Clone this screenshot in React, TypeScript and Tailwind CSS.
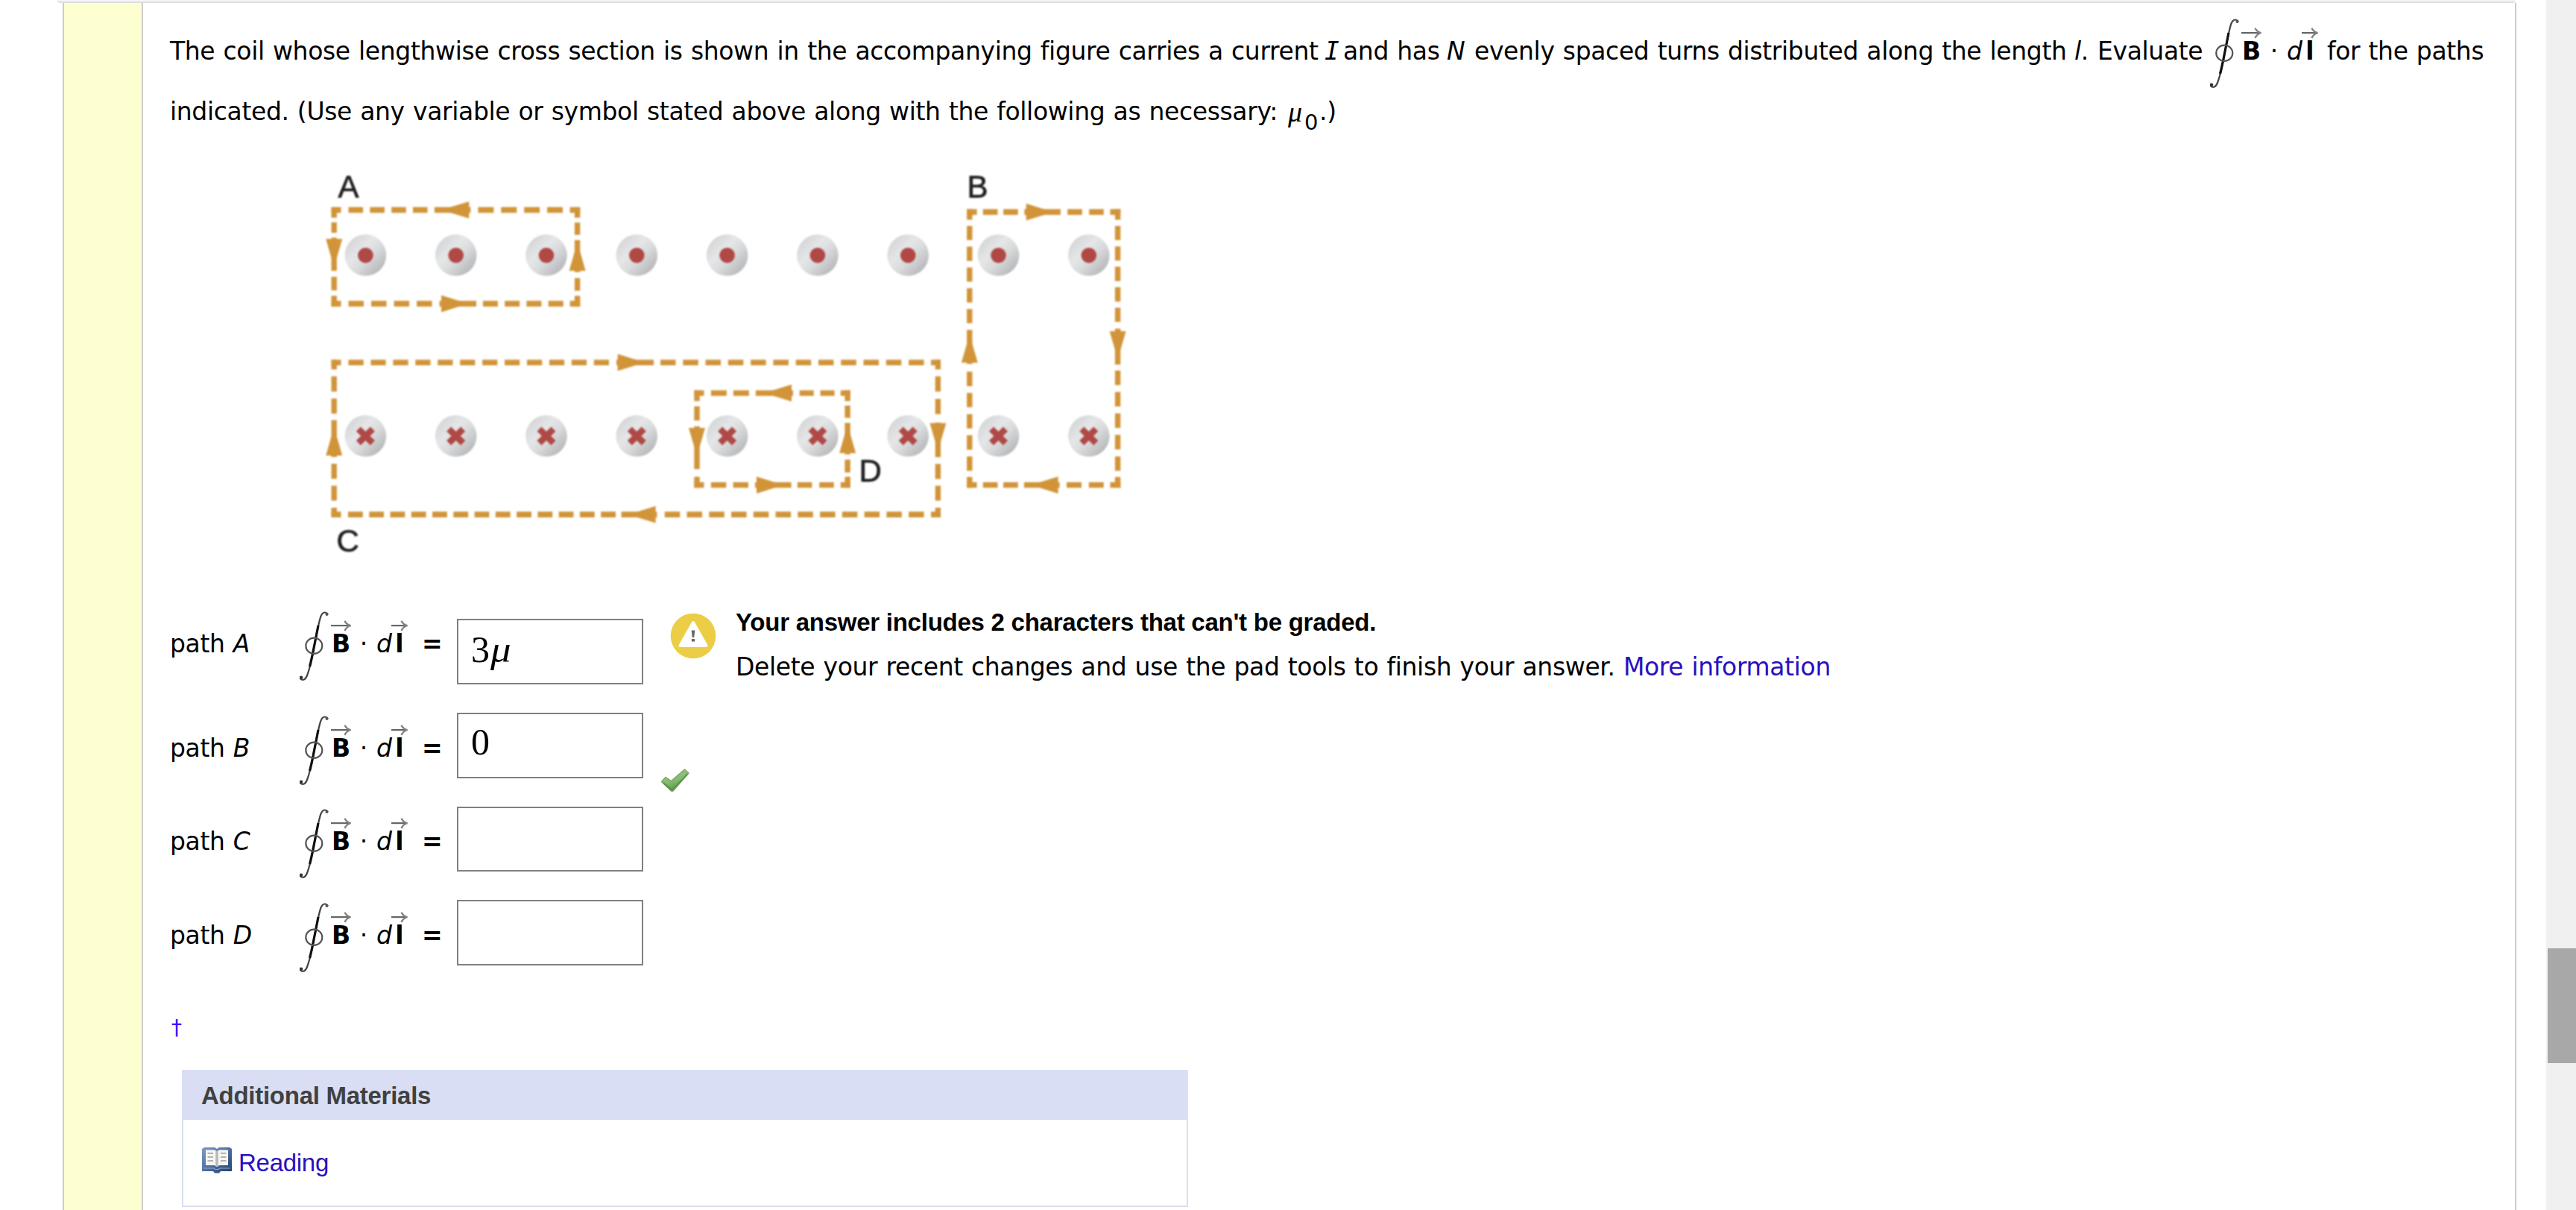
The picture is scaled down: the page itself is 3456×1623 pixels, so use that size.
import React from "react";

type Seg = [number, number];
type Dir = "left" | "right" | "up" | "down";
type Side = { axis: "h" | "v"; at: number; segs: Seg[]; dir: Dir; base: number; tip: number };

const AMBER = "#d19439";

/* n equal dashes of the given length, spread from `from` to `to` */
const run = (from: number, to: number, n: number, len: number): Seg[] =>
  Array.from({ length: n }, (_, i) => {
    const s = n === 1 ? from : from + ((to - len - from) / (n - 1)) * i;
    return [s, s + len] as Seg;
  });

const sides: Side[] = [
  // Path A
  { axis: "h", at: 69.3, dir: "left", base: 209.3, tip: 172, segs: [[24.6, 37.5], ...run(47.5, 153.6, 4, 19.6), [162.9, 211.4], ...run(221.4, 335, 4, 21), [344.6, 358.2]] },
  { axis: "h", at: 191, dir: "right", base: 172, tip: 208, segs: [[24.6, 37.5], ...run(47.5, 159.6, 4, 20.5), [169.6, 219], ...run(227.9, 335.7, 4, 20), [344.6, 358.2]] },
  { axis: "v", at: 28.2, dir: "down", base: 107, tip: 144, segs: [[65.7, 79.3], [85.3, 99], [105.3, 148.3], [156, 173.7], [180.7, 194.7]] },
  { axis: "v", at: 354.6, dir: "up", base: 148.3, tip: 111, segs: [[65.7, 79.3], [85.7, 101.7], [108.3, 150], [157.7, 174.3], [180.7, 194.7]] },
  // Path B
  { axis: "h", at: 72, dir: "right", base: 956.7, tip: 993, segs: [[877.2, 890.6], ...run(898.8, 945.7, 2, 19.6), [954.3, 1002.9], ...run(1012.2, 1060.8, 2, 19.6), [1069.4, 1083.3]] },
  { axis: "h", at: 426.3, dir: "left", base: 999.6, tip: 963, segs: [[877.2, 890.6], ...run(898.8, 945.7, 2, 19.6), [953.9, 1001.6], ...run(1011, 1060.8, 2, 20), [1069.4, 1083.3]] },
  { axis: "v", at: 880.8, dir: "up", base: 267.7, tip: 231, segs: [[68.3, 82], ...run(90, 216.3, 5, 18.5), [225, 269.3], ...run(279.3, 408, 5, 18.7), [416, 430]] },
  { axis: "v", at: 1079.6, dir: "down", base: 226.7, tip: 263, segs: [[68.3, 82], ...run(90, 214.7, 5, 18.5), [223.3, 270], ...run(277.7, 408, 5, 18.8), [416, 430]] },
  // Path C
  { axis: "h", at: 267.3, dir: "right", base: 408.6, tip: 445, segs: [[24.6, 37.5], ...run(47.5, 397, 12, 20.2), [407, 457], ...run(466, 819.6, 12, 20.5), [829, 842]] },
  { axis: "h", at: 464.7, dir: "left", base: 459.6, tip: 423, segs: [[24.6, 37.5], ...run(47, 406, 13, 19.8), [413.6, 461.4], ...run(471.8, 819.6, 12, 20.5), [829, 842]] },
  { axis: "v", at: 28.2, dir: "up", base: 388, tip: 351, segs: [[263.7, 276.3], ...run(285.3, 333.7, 2, 19.7), [342, 390], ...run(398.7, 446.7, 2, 19.5), [455.7, 468.4]] },
  { axis: "v", at: 838.4, dir: "down", base: 346, tip: 382, segs: [[263.7, 276.3], ...run(285.3, 334.3, 2, 19.7), [345.3, 390.3], ...run(399, 446.7, 2, 19.5), [455.7, 468.4]] },
  // Path D
  { axis: "h", at: 307, dir: "left", base: 642, tip: 605, segs: [[511.4, 524.5], ...run(533.9, 584.9, 2, 21), [593.9, 644], ...run(652.7, 699.6, 2, 19), [707.8, 720.8]] },
  { axis: "h", at: 426.3, dir: "right", base: 595, tip: 631, segs: [[511.4, 524.5], ...run(533.9, 584, 2, 20.4), [593, 641.6], ...run(649.8, 698.8, 2, 19.6), [707.8, 720.8]] },
  { axis: "v", at: 515, dir: "down", base: 352.3, tip: 389, segs: [[303.3, 317.3], [324.3, 342.7], [350, 405.7], [415.7, 430]] },
  { axis: "v", at: 717.1, dir: "up", base: 385, tip: 348, segs: [[303.3, 317.3], [323.3, 339.3], [345.7, 386.7], [393.3, 410], [415.7, 430]] },
];

function PathSide({ side }: { side: Side }) {
  const { axis, at, segs, base, tip } = side;
  const d = segs
    .map(([a, b]) => (axis === "h" ? `M${a} ${at}H${b}` : `M${at} ${a}V${b}`))
    .join("");
  const head =
    axis === "h"
      ? `M${base} ${at - 11}L${tip} ${at}L${base} ${at + 11}Z`
      : `M${at - 11} ${base}L${at} ${tip}L${at + 11} ${base}Z`;
  return (
    <g>
      <path d={d} stroke={AMBER} strokeWidth="7.4" fill="none" />
      <path d={head} fill={AMBER} />
    </g>
  );
}

function CoilFigure() {
  const columns = Array.from({ length: 9 }, (_, i) => 70.4 + i * 121.3);
  return (
    <svg
      width="1110"
      height="558"
      viewBox="0 0 1110 540"
      preserveAspectRatio="none"
      className="ml-[192px] mt-10 block shrink-0 blur-[0.8px]"
    >
      <defs>
        <linearGradient id="wire" x1="0.1" y1="0.15" x2="0.85" y2="0.9">
          <stop offset="0" stopColor="#d3d5d6" />
          <stop offset="0.35" stopColor="#e5e6e7" />
          <stop offset="0.6" stopColor="#d9dadb" />
          <stop offset="1" stopColor="#b5b7ba" />
        </linearGradient>
      </defs>
      {columns.map((x) => (
        <g key={x}>
          <circle cx={x} cy="132.3" r="27.8" fill="url(#wire)" />
          <circle cx={x} cy="132.5" r="10.3" fill="#b04845" />
          <circle cx={x} cy="374.8" r="27.8" fill="url(#wire)" />
          <path d={`M${x - 9.5} 365.5l19 18.6M${x + 9.5} 365.5l-19 18.6`} stroke="#b04845" strokeWidth="8.6" />
        </g>
      )).map((node, i) => (
        <g key={i} transform="scale(1 0.9677)">{node}</g>
      ))}
      {sides.map((s, i) => (
        <PathSide key={i} side={s} />
      ))}
      <g fontFamily="'Liberation Sans', sans-serif" fontSize="42" fill="#1d1d1f" stroke="#1d1d1f" strokeWidth="0.7">
        <text x="33.6" y="53.3">A</text>
        <text x="877.4" y="53.3">B</text>
        <text x="31.5" y="512.8">C</text>
        <text x="732.5" y="422.3">D</text>
      </g>
    </svg>
  );
}

function VectorArrow({ width }: { width: number }) {
  return (
    <svg width={width} height="15" viewBox={`0 0 ${width} 15`} className="block">
      <path d={`M0 7.100H${width - 2}`} stroke="#666" strokeWidth="2.200" />
      <path
        d={`M${width - 8.5} 0.8C${width - 7} 4 ${width - 4} 6.4 ${width - 0.5} 7.1C${width - 4} 7.8 ${width - 7} 10.8 ${width - 8.5} 14`}
        stroke="#828282"
        strokeWidth="2.400"
        fill="none"
      />
    </svg>
  );
}

function ContourIntegral() {
  return (
    <div className="flex h-[93px] w-[145px] shrink-0 items-start leading-[34px] tracking-normal">
      <svg width="39" height="93" viewBox="0 0 39 93" className="mr-[3px] block shrink-0 blur-[0.4px]">
        <path
          d="M38 4C36 1 31.500 -0.500 28.500 6.500C26 13 23.500 26 19.500 46.700C16 66 13.500 77 10 86C7.500 92.500 4 93 0.500 90"
          fill="none"
          stroke="#444"
          strokeWidth="2.200"
        />
        <path d="M25 19C23 29 21.500 37 19.500 46.700C17.500 57 16 65 13.500 74" fill="none" stroke="#111" strokeWidth="3.200" />
        <circle cx="2" cy="88.800" r="2.300" fill="#333" />
        <circle cx="36.500" cy="4" r="2" fill="#555" />
        <ellipse cx="19.300" cy="46.300" rx="11" ry="10.600" fill="none" stroke="#555" strokeWidth="2.200" />
      </svg>
      <div className="flex w-[27px] flex-col items-center pt-3">
        <VectorArrow width={27} />
        <b>B</b>
      </div>
      <span className="w-[34px] pt-[27px] text-center">·</span>
      <i className="w-5 pt-[27px]">d</i>
      <div className="flex w-[22px] flex-col items-center pt-3">
        <VectorArrow width={22} />
        <b>l</b>
      </div>
    </div>
  );
}

function WarningIcon() {
  return (
    <svg width="62" height="62" viewBox="0 0 62 62" className="block">
      <circle cx="31" cy="31" r="30.300" fill="#ebce45" />
      <path d="M31 13L48.500 44H13.500Z" fill="#fff" stroke="#fff" strokeWidth="4" strokeLinejoin="round" />
      <path d="M28.700 23.500H33.300L32.200 33H29.800ZM28.900 35H33.100V38.600H28.900Z" fill="#666" />
    </svg>
  );
}

function CheckIcon() {
  return (
    <svg width="39" height="33" viewBox="0 0 39 33" className="block">
      <defs>
        <linearGradient id="tick" x1="0" y1="0" x2="0.4" y2="1">
          <stop offset="0" stopColor="#a3cb92" />
          <stop offset="0.6" stopColor="#83bb6c" />
          <stop offset="1" stopColor="#5d9648" />
        </linearGradient>
      </defs>
      <path d="M1.500 18.500L7 12.500L14.500 17.500L32.500 2L38 7L17 31H14.500Z" fill="url(#tick)" stroke="#7aa56a" strokeWidth="1.400" strokeLinejoin="round" />
      <path d="M4 20L15.500 30L36.500 8" fill="none" stroke="#5a9146" strokeWidth="1.800" />
    </svg>
  );
}

function BookIcon() {
  return (
    <svg width="40" height="37" viewBox="0 0 40 37" className="block">
      <defs>
        <linearGradient id="cover" x1="0" y1="0" x2="1" y2="1">
          <stop offset="0" stopColor="#7f9cc4" />
          <stop offset="0.500" stopColor="#4f6f9f" />
          <stop offset="1" stopColor="#1f3d70" />
        </linearGradient>
      </defs>
      <path d="M0 4L3 2H17L20 4L23 2H37L40 4V34H25L23 36.500H17L15 34H0Z" fill="url(#cover)" />
      <path d="M5 5.500H16.500L20 7L23.500 5.500H35V26H23.500L20 28L16.500 26H5Z" fill="#f5f5f3" />
      <path d="M20 7V27.500" stroke="#b9b9b9" strokeWidth="3.500" />
      <path d="M7.500 10H15M7.500 15H15M7.500 20H15M25 10H32.500M25 15H32.500M25 20H32.500" stroke="#b3b3b3" strokeWidth="1.800" />
      <path d="M2 30H16L18 31.500H22L24 30H38" stroke="#8fa6c8" strokeWidth="1.200" fill="none" />
    </svg>
  );
}

type RowProps = {
  name: string;
  row: string;
  label: string;
  formula: string;
  box: string;
  value?: React.ReactNode;
  children?: React.ReactNode;
};

function AnswerRow({ name, row, label, formula, box, value, children }: RowProps) {
  return (
    <div className={`flex shrink-0 items-start ${row}`}>
      <div className={`w-[174px] shrink-0 whitespace-nowrap ${label}`}>
        path <i>{name}</i>
      </div>
      <div className={`flex shrink-0 ${formula}`}>
        <ContourIntegral />
        <b className="w-[66px] pl-[19px] pt-6">=</b>
      </div>
      <div className={`w-[250px] shrink-0 border-2 border-[#808080] bg-white pl-[17px] font-['Liberation_Serif',serif] text-[50px] leading-[56px] tracking-normal ${box}`}>
        {value}
      </div>
      {children}
    </div>
  );
}

export default function App() {
  return (
    <div className="flex h-[1623px] w-[3456px] overflow-hidden bg-white font-['DejaVu_Sans',sans-serif] text-[33px] leading-10 tracking-[-0.36px] text-black [word-spacing:1.1px]">
      <div className="flex w-[3416px] shrink-0 flex-col">
        <div className="ml-[77px] h-1 w-[3298px] shrink-0 rounded-b-[4px] border-b-2 border-[#dedede] bg-[#f5f5f5]" />
        <div className="ml-[84px] flex w-[3292px] grow border-x-2 border-[#cccccc]">
          <div className="w-[106px] shrink-0 border-r-2 border-[#cccccc] bg-[#fdffd0]" />
          <div className="flex grow flex-col pl-9">
            <div className="mt-[45px] flex h-10 shrink-0 items-start whitespace-nowrap">
              <span className="w-[1549px]">The coil whose lengthwise cross section is shown in the accompanying figure carries a current</span>
              <i className="w-[25px] font-['DejaVu_Sans_Mono',monospace]">I</i>
              <span className="w-[139px]">and has</span>
              <i className="w-[37px]">N</i>
              <span className="w-[805px]">evenly spaced turns distributed along the length</span>
              <span className="w-[31px]"><i>l</i>.</span>
              <span className="w-[151px]">Evaluate</span>
              <div className="-mt-6 mr-3">
                <ContourIntegral />
              </div>
              <span>for the paths</span>
            </div>
            <div className="mt-[41px] flex h-10 shrink-0 whitespace-nowrap">
              <span className="w-[1500px]">indicated. (Use any variable or symbol stated above along with the following as necessary:</span>
              <i className="w-[22px] font-['Liberation_Serif',serif] text-[38px]">μ</i>
              <span className="w-[20px] pt-[14px] text-[29px]">0</span>
              <span>.)</span>
            </div>

            <CoilFigure />

            <div className="mt-[52px] flex flex-col">
              <AnswerRow
                name="A" row="h-[136px]" label="mt-6" formula="" box="mt-[10px] h-[88px] pt-[11px]"
                value={<>3<i className="ml-px inline-block origin-left scale-x-110">μ</i></>}
              >
                <div className="ml-9 mt-0.5">
                  <WarningIcon />
                </div>
                <div className="ml-[26px] mt-[-5px] whitespace-nowrap">
                  <div className="h-[60px] font-['Liberation_Sans',sans-serif] font-bold tracking-[-0.25px] [word-spacing:0px]">Your answer includes 2 characters that can't be graded.</div>
                  <div>
                    Delete your recent changes and use the pad tools to finish your answer.{" "}
                    <a className="text-[#2a10c0]">More information</a>
                  </div>
                </div>
              </AnswerRow>
              <AnswerRow name="B" row="h-[126px]" label="mt-7" formula="mt-1" box="h-[88px] pt-[9px]" value="0">
                <div className="ml-[23px] mt-[74px]">
                  <CheckIcon />
                </div>
              </AnswerRow>
              <AnswerRow name="C" row="h-[125px]" label="mt-[27px]" formula="mt-[3px]" box="h-[87px]" />
              <AnswerRow name="D" row="h-[128px]" label="mt-7" formula="mt-1" box="h-[88px]" />
            </div>

            <div className="mt-[24px] h-[40px] pl-[2px] text-[28px] text-[#3a10ff]">†</div>

            <div className="ml-4 mt-[36px] h-[184px] w-[1350px] shrink-0 border-2 border-[#d9def4] font-['Liberation_Sans',sans-serif] tracking-[-0.27px] [word-spacing:0px]">
              <div className="h-[65px] bg-[#d9def4] pl-6 pt-[13px] font-bold text-[#404040]">Additional Materials</div>
              <div className="flex items-start pl-[25px] pt-[35px]">
                <BookIcon />
                <a className="ml-[9px] mt-[3px] text-[#2a10c0]">Reading</a>
              </div>
            </div>
          </div>
        </div>
      </div>
      <div className="flex w-10 shrink-0 flex-col bg-[#f0f0f0] pl-0.5 pt-[1272px]">
        <div className="h-[154px] bg-[#a8a8a8]" />
      </div>
    </div>
  );
}
